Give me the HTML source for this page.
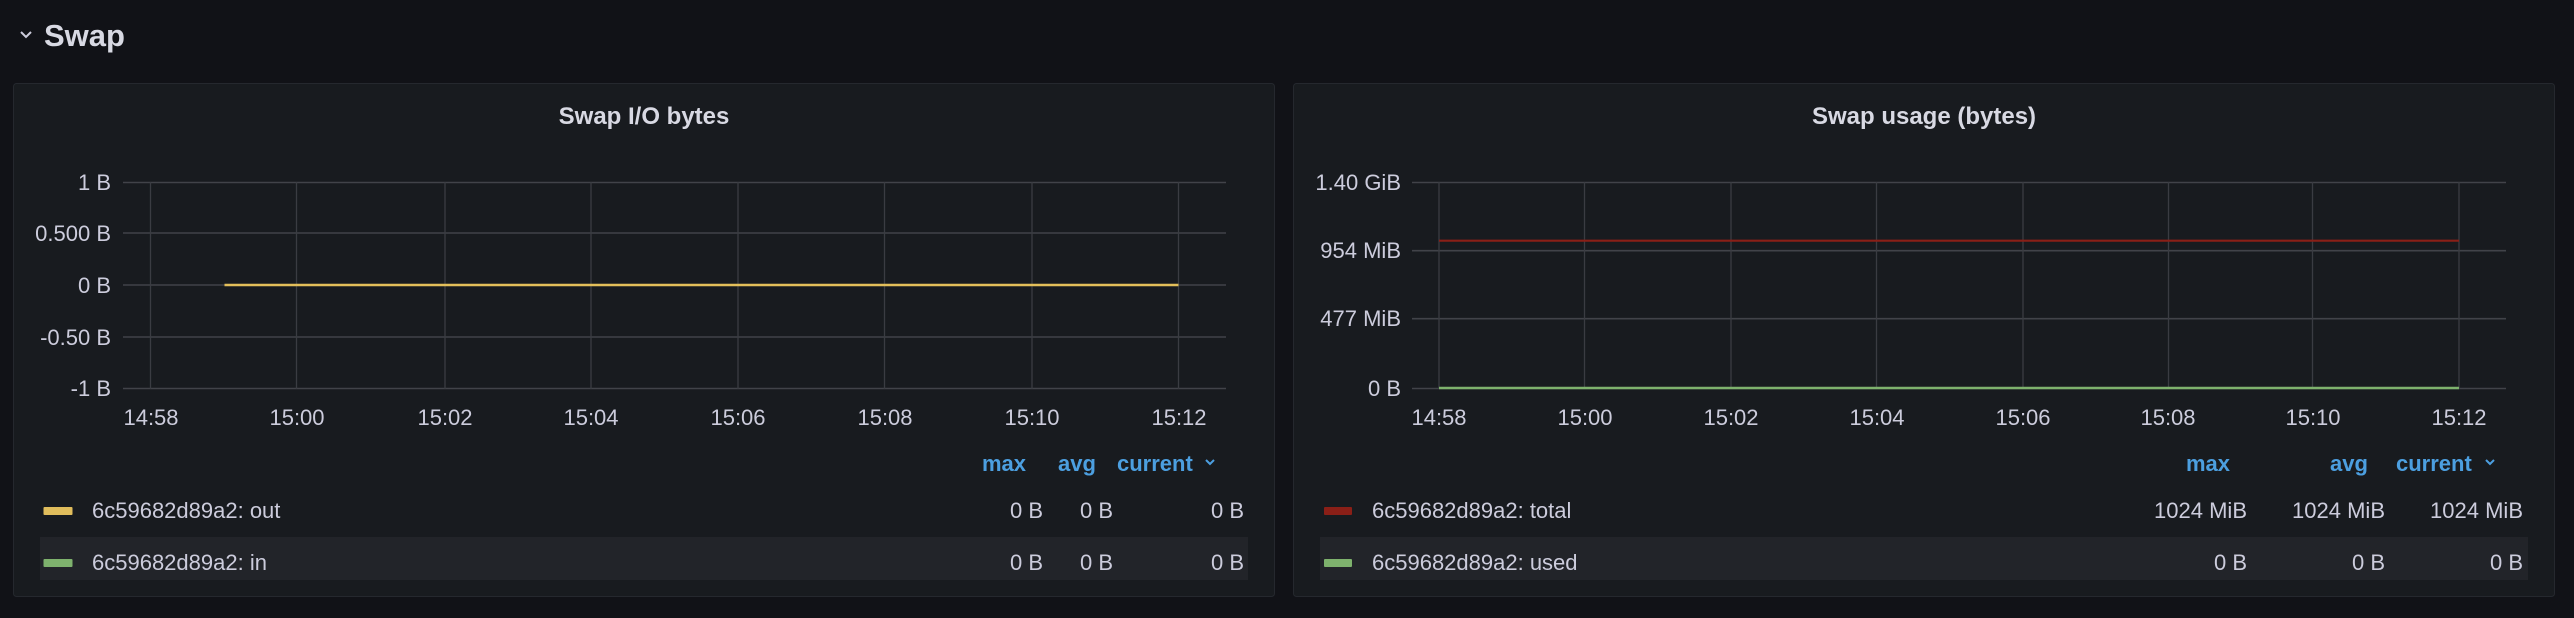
<!DOCTYPE html>
<html><head><meta charset="utf-8"><style>
html,body{margin:0;padding:0;background:#111217;width:2574px;height:618px;overflow:hidden}
svg{display:block}
text{font-family:"Liberation Sans",sans-serif}
</style></head><body>
<svg width="2574" height="618" viewBox="0 0 2574 618" xmlns="http://www.w3.org/2000/svg">
<rect width="2574" height="618" fill="#111217"/>
<path d="M21 32 l5 5 l5 -5" fill="none" stroke="#ccccdc" stroke-width="2"/>
<text x="44" y="46" font-size="31" fill="#d8d9e3" font-weight="bold">Swap</text>

<!-- Panel 1 -->
<rect x="13.5" y="83.5" width="1261" height="513" rx="3" fill="#181b1f" stroke="#25282e"/>
<text x="644" y="124" font-size="24" font-weight="600" fill="#d8d9e3" text-anchor="middle">Swap I/O bytes</text>
<g stroke="#414349" stroke-width="1.6">
<line x1="123" y1="182.5" x2="1226" y2="182.5"/><line x1="123" y1="233" x2="1226" y2="233"/>
<line x1="123" y1="285" x2="1226" y2="285"/><line x1="123" y1="337" x2="1226" y2="337"/>
<line x1="123" y1="388.5" x2="1226" y2="388.5"/>
</g>
<g stroke="#3a3c42" stroke-width="1.3">
<line x1="150.5" y1="182" x2="150.5" y2="389"/><line x1="296.5" y1="182" x2="296.5" y2="389"/>
<line x1="445" y1="182" x2="445" y2="389"/><line x1="591" y1="182" x2="591" y2="389"/>
<line x1="738" y1="182" x2="738" y2="389"/><line x1="884.5" y1="182" x2="884.5" y2="389"/>
<line x1="1032" y1="182" x2="1032" y2="389"/><line x1="1178.5" y1="182" x2="1178.5" y2="389"/>
</g>
<line x1="224.5" y1="285" x2="1178.5" y2="285" stroke="#e3bf5a" stroke-width="2.5"/>
<g font-size="22" fill="#ccccdc" text-anchor="end">
<text x="111" y="190">1 B</text><text x="111" y="241">0.500 B</text><text x="111" y="293">0 B</text>
<text x="111" y="345">-0.50 B</text><text x="111" y="396">-1 B</text>
</g>
<g font-size="22" fill="#ccccdc" text-anchor="middle">
<text x="151" y="425">14:58</text><text x="297" y="425">15:00</text><text x="445" y="425">15:02</text>
<text x="591" y="425">15:04</text><text x="738" y="425">15:06</text><text x="885" y="425">15:08</text>
<text x="1032" y="425">15:10</text><text x="1179" y="425">15:12</text>
</g>
<g font-size="22" fill="#4c9fe0" font-weight="600">
<text x="982" y="471">max</text><text x="1058" y="471">avg</text><text x="1117" y="471">current</text>
</g>
<path d="M1206 460 l4 4 l4 -4" fill="none" stroke="#4c9fe0" stroke-width="2"/>
<rect x="40" y="537" width="1208" height="43" fill="#222429"/>
<rect x="43.5" y="507" width="29" height="8" rx="1" fill="#e0bd5c"/>
<rect x="43.5" y="559" width="29" height="8" rx="1" fill="#7eb26d"/>
<g font-size="22" fill="#ccccdc">
<text x="92" y="518">6c59682d89a2: out</text><text x="92" y="570">6c59682d89a2: in</text>
</g>
<g font-size="22" fill="#ccccdc" text-anchor="end">
<text x="1043" y="518">0 B</text><text x="1113" y="518">0 B</text><text x="1244" y="518">0 B</text>
<text x="1043" y="570">0 B</text><text x="1113" y="570">0 B</text><text x="1244" y="570">0 B</text>
</g>

<!-- Panel 2 -->
<rect x="1293.5" y="83.5" width="1261" height="513" rx="3" fill="#181b1f" stroke="#25282e"/>
<text x="1924" y="124" font-size="24" font-weight="600" fill="#d8d9e3" text-anchor="middle">Swap usage (bytes)</text>
<g stroke="#414349" stroke-width="1.6">
<line x1="1412" y1="182.5" x2="2506" y2="182.5"/><line x1="1412" y1="250.7" x2="2506" y2="250.7"/>
<line x1="1412" y1="318.7" x2="2506" y2="318.7"/><line x1="1412" y1="388.5" x2="2506" y2="388.5"/>
</g>
<g stroke="#3a3c42" stroke-width="1.3">
<line x1="1439" y1="182" x2="1439" y2="389"/><line x1="1584.5" y1="182" x2="1584.5" y2="389"/>
<line x1="1731" y1="182" x2="1731" y2="389"/><line x1="1876.5" y1="182" x2="1876.5" y2="389"/>
<line x1="2023" y1="182" x2="2023" y2="389"/><line x1="2168.5" y1="182" x2="2168.5" y2="389"/>
<line x1="2312.5" y1="182" x2="2312.5" y2="389"/><line x1="2459" y1="182" x2="2459" y2="389"/>
</g>
<line x1="1439" y1="240.7" x2="2459" y2="240.7" stroke="#8a1f17" stroke-width="2.2"/>
<line x1="1439" y1="388" x2="2459" y2="388" stroke="#7eb26d" stroke-width="2.5"/>
<g font-size="22" fill="#ccccdc" text-anchor="end">
<text x="1401" y="190">1.40 GiB</text><text x="1401" y="258">954 MiB</text>
<text x="1401" y="326">477 MiB</text><text x="1401" y="396">0 B</text>
</g>
<g font-size="22" fill="#ccccdc" text-anchor="middle">
<text x="1439" y="425">14:58</text><text x="1585" y="425">15:00</text><text x="1731" y="425">15:02</text>
<text x="1877" y="425">15:04</text><text x="2023" y="425">15:06</text><text x="2168" y="425">15:08</text>
<text x="2313" y="425">15:10</text><text x="2459" y="425">15:12</text>
</g>
<g font-size="22" fill="#4c9fe0" font-weight="600">
<text x="2186" y="471">max</text><text x="2330" y="471">avg</text><text x="2396" y="471">current</text>
</g>
<path d="M2486 460 l4 4 l4 -4" fill="none" stroke="#4c9fe0" stroke-width="2"/>
<rect x="1320" y="537" width="1208" height="43" fill="#222429"/>
<rect x="1324" y="507" width="28" height="8" rx="1" fill="#8a1f17"/>
<rect x="1324" y="559" width="28" height="8" rx="1" fill="#7eb26d"/>
<g font-size="22" fill="#ccccdc">
<text x="1372" y="518">6c59682d89a2: total</text><text x="1372" y="570">6c59682d89a2: used</text>
</g>
<g font-size="22" fill="#ccccdc" text-anchor="end">
<text x="2247" y="518">1024 MiB</text><text x="2385" y="518">1024 MiB</text><text x="2523" y="518">1024 MiB</text>
<text x="2247" y="570">0 B</text><text x="2385" y="570">0 B</text><text x="2523" y="570">0 B</text>
</g>
</svg>
</body></html>
